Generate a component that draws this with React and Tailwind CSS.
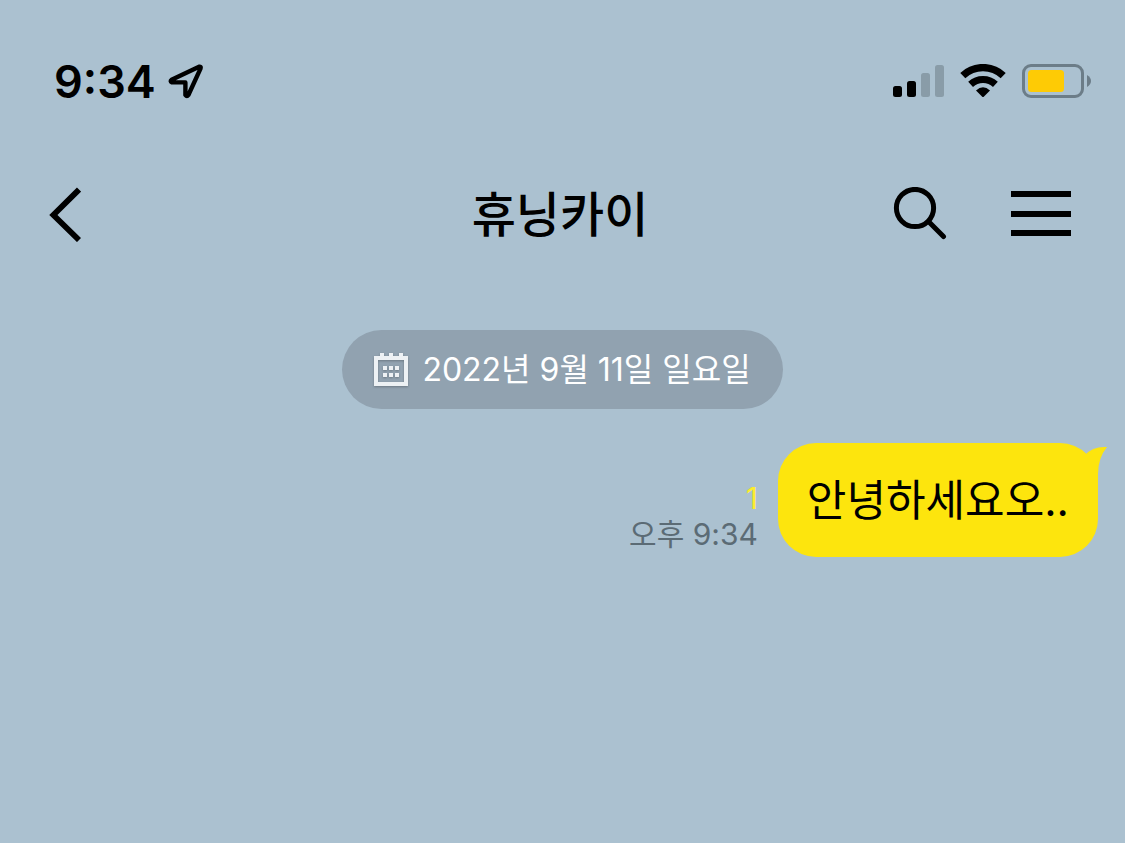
import React from "react";

const LocationArrow = () => (
  <svg width="36" height="36" viewBox="0 0 36 36" fill="none" aria-hidden="true">
    <path
      d="M31.6 3.6 Q33.2 3.4 32.5 5.6 L20.4 32 Q18.9 34 17.4 32 V19.4 H4 Q1.6 18.4 3.6 16.8 Z"
      stroke="#000"
      strokeWidth="4.4"
      strokeLinejoin="round"
    />
  </svg>
);

const SignalIcon = () => (
  <svg width="51" height="34" viewBox="0 0 51 34" role="img" aria-label="Signal">
    <rect x="0" y="22" width="9" height="11" rx="2.5" />
    <rect x="14" y="17" width="9" height="16" rx="2.5" />
    <rect x="28" y="9" width="9" height="24" rx="2.5" fill="#899ca8" />
    <rect x="42" y="1" width="9" height="32" rx="2.5" fill="#899ca8" />
  </svg>
);

const WifiIcon = () => (
  <svg width="46" height="34" viewBox="0 0 46 34" role="img" aria-label="Wi-Fi">
    <path d="M2.8 11.6 A29.5 29.5 0 0 1 43.2 11.6" fill="none" stroke="#000" strokeWidth="7.4" />
    <path d="M10.6 20.4 A18 18 0 0 1 35.4 20.4" fill="none" stroke="#000" strokeWidth="7" />
    <path d="M16 26.4 Q23 20 30 26.4 L24 32.6 Q23 33.6 22 32.6 Z" />
  </svg>
);

const BatteryIcon = () => (
  <svg width="69" height="34" viewBox="0 0 69 34" role="img" aria-label="Battery">
    <rect x="1.5" y="1.5" width="59" height="31" rx="7.5" fill="none" stroke="#6c7d88" strokeWidth="3" />
    <rect x="6" y="6" width="36" height="22" rx="3.5" fill="#fecb05" />
    <path d="M65 11 Q69 13.5 69 17 Q69 20.5 65 23 Z" fill="#6c7d88" />
  </svg>
);

const BackIcon = () => (
  <svg width="32" height="56" viewBox="0 0 32 56" fill="none" aria-hidden="true">
    <path d="M30 3.6 L4.4 29 L30 54" stroke="#000" strokeWidth="5.8" />
  </svg>
);

const SearchIcon = () => (
  <svg width="54" height="54" viewBox="0 0 54 54" fill="none" stroke="#000" aria-hidden="true">
    <circle cx="22" cy="21" r="18.6" strokeWidth="5" />
    <path d="M35.5 34.5 L50.5 49.5" strokeWidth="5" strokeLinecap="round" />
  </svg>
);

const MenuIcon = () => (
  <svg width="60" height="48" viewBox="0 0 60 48" aria-hidden="true">
    <rect y="1" width="60" height="6" />
    <rect y="21" width="60" height="6" />
    <rect y="40" width="60" height="6" />
  </svg>
);

const CalendarIcon = () => (
  <svg
    width="34"
    height="34"
    viewBox="0 0 34 34"
    className="drop-shadow-[0_1px_1px_rgba(0,0,0,0.25)]"
    fill="#edf1f4"
    aria-hidden="true"
  >
    <rect x="2" y="5" width="30" height="26" fill="none" stroke="#edf1f4" strokeWidth="4" />
    {[6, 15, 25].map((x) => (
      <rect key={x} x={x} y="0" width="4" height="6" />
    ))}
    {[13, 20].map((y) =>
      [9, 15, 21].map((x) => (
        <rect key={`${x}-${y}`} x={x} y={y} width="4" height="4" />
      ))
    )}
  </svg>
);

const StatusBar = () => (
  <div className="flex h-[50px] items-center justify-between pl-[54px] pr-[34px]">
    <div className="flex items-center gap-3">
      <span className="text-[45px] font-semibold leading-none">9:34</span>
      <LocationArrow />
    </div>
    <div className="flex items-center gap-4">
      <SignalIcon />
      <WifiIcon />
      <BatteryIcon />
    </div>
  </div>
);

const ChatHeader = ({ title }) => (
  <header className="mt-[68px] grid h-20 grid-cols-[1fr_auto_1fr] items-center pl-[49px] pr-[54px]">
    <button type="button" aria-label="뒤로" className="justify-self-start">
      <BackIcon />
    </button>
    <h1 className="pt-[2px] text-[48px] font-medium leading-none">{title}</h1>
    <div className="flex items-center gap-16 justify-self-end">
      <button type="button" aria-label="검색">
        <SearchIcon />
      </button>
      <button type="button" aria-label="메뉴">
        <MenuIcon />
      </button>
    </div>
  </header>
);

const DateBadge = ({ date }) => (
  <div className="flex h-[79px] items-center gap-[14px] self-center rounded-full bg-[#91a2b0] px-8 text-white">
    <CalendarIcon />
    <span className="text-[32px] leading-none">{date}</span>
  </div>
);

const SentMessage = ({ text, time, unread }) => (
  <div className="flex items-end justify-end gap-5 pr-[27px]">
    <div className="flex flex-col items-end pb-[5px] text-[30px] leading-9">
      <span className="text-[#fcec2d]">{unread}</span>
      <span className="text-[#5b6b75]">{time}</span>
    </div>
    <div className="relative flex h-[114px] items-center rounded-[38px] bg-[#fde50d] px-[29px]">
      <p className="text-[43px] leading-none">{text}</p>
      <svg
        className="absolute -right-[9px] top-0"
        width="40"
        height="40"
        viewBox="0 0 40 40"
        fill="#fde50d"
        aria-hidden="true"
      >
        <path d="M10 20 L18 12 Q26 3 40 4 Q31 15 31 31 V40 H10 Z" />
      </svg>
    </div>
  </div>
);

const App = () => {
  return (
    <div className="flex min-h-screen flex-col bg-[#abc1d0] pt-14 font-['Inter','Noto_Sans_CJK_KR',sans-serif] text-black">
      <StatusBar />
      <ChatHeader title="휴닝카이" />
      <main className="mt-[76px] flex flex-col gap-[34px]">
        <DateBadge date="2022년 9월 11일 일요일" />
        <SentMessage text="안녕하세요오.." time="오후 9:34" unread={1} />
      </main>
    </div>
  );
};

export default App;
